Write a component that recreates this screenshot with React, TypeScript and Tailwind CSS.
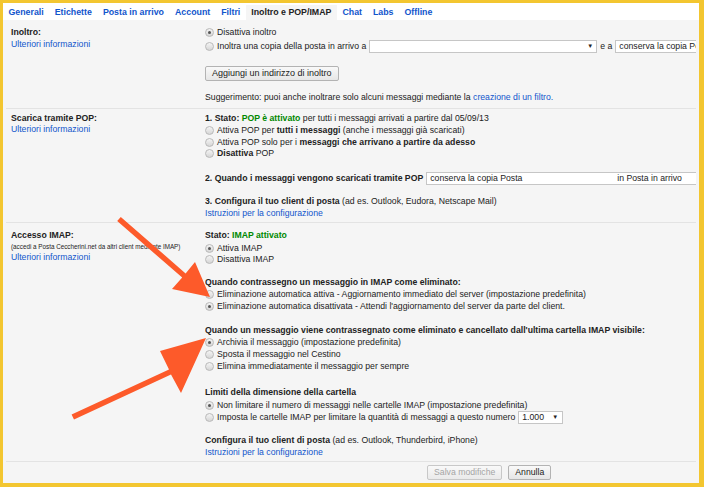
import React from "react";

const tabs = [
  "Generali",
  "Etichette",
  "Posta in arrivo",
  "Account",
  "Filtri",
  "Inoltro e POP/IMAP",
  "Chat",
  "Labs",
  "Offline",
];

function Radio({ checked = false }: { checked?: boolean }) {
  return (
    <span className="mr-[3px] inline-flex h-[9px] w-[9px] shrink-0 items-center justify-center rounded-full border border-[#b9b9b9] bg-gradient-to-b from-[#f4f4f4] to-[#d6d6d6]">
      {checked && <span className="h-[3px] w-[3px] rounded-full bg-[#555]" />}
    </span>
  );
}

function Opt({ checked, children }: { checked?: boolean; children: React.ReactNode }) {
  return (
    <div className="flex h-[11.8px] items-center whitespace-nowrap">
      <Radio checked={checked} />
      <span>{children}</span>
    </div>
  );
}

function Line({ children, className = "" }: { children: React.ReactNode; className?: string }) {
  return <div className={`h-[11.8px] whitespace-nowrap leading-[11.8px] ${className}`}>{children}</div>;
}

function Link({ children }: { children: React.ReactNode }) {
  return <span className="text-[#1155cc]">{children}</span>;
}

function Section({
  left,
  children,
  className = "",
}: {
  left: React.ReactNode;
  children: React.ReactNode;
  className?: string;
}) {
  return (
    <div className={`mx-[3px] flex border-b border-[#e3e3e3] ${className}`}>
      <div className="w-[199px] shrink-0 pl-[5px]">{left}</div>
      <div className="min-w-0 flex-1 overflow-hidden">{children}</div>
    </div>
  );
}

function Arrows() {
  return (
    <svg className="pointer-events-none absolute left-0 top-0" width="704" height="487" viewBox="0 0 704 487">
      <polygon
        fill="#fd5a2a"
        points="120.8,216.9 185.6,273.4 195,262 210,297 172,289 182.2,277.6 117.2,221.1"
      />
      <polygon
        fill="#fd5a2a"
        points="71.6,414.5 169,369.6 160,351 206,338 181,393 171,374.4 74,419.5"
      />
    </svg>
  );
}

export default function App() {
  return (
    <div
      className="relative h-[487px] w-[704px] overflow-hidden bg-[#f3c630] pb-[4px] pl-[3px] pr-[5px] pt-[3px] text-[8.7px] text-[#222]"
      style={{ fontFamily: '"Liberation Sans", Arial, sans-serif' }}
    >
      <div className="flex h-full flex-col overflow-hidden bg-[#f5f5f5]">
        {/* tabs */}
        <div className="flex h-[17px] shrink-0 items-end bg-white">
          {tabs.map((t) => (
            <div
              key={t}
              className={`flex h-[15px] items-center px-[5.5px] text-[8.8px] font-bold ${
                t === "Inoltro e POP/IMAP" ? "bg-[#f5f5f5] text-[#222]" : "text-[#1155cc]"
              }`}
            >
              {t}
            </div>
          ))}
        </div>

        {/* Inoltro */}
        <Section
          className="pb-[4px] pt-[7px]"
          left={
            <>
              <Line className="font-bold">Inoltro:</Line>
              <Line>
                <Link>Ulteriori informazioni</Link>
              </Line>
            </>
          }
        >
          <Opt checked>Disattiva inoltro</Opt>
          <div className="mt-[1px] flex h-[14px] items-center whitespace-nowrap">
            <Radio />
            <span>Inoltra una copia della posta in arrivo a</span>
            <span className="ml-[3px] flex h-[13px] w-[228px] shrink-0 items-center justify-end border border-[#c6c6c6] bg-white pr-[3px] text-[6px]">
              ▼
            </span>
            <span className="ml-[3px]">e a</span>
            <span className="ml-[3px] flex h-[13px] w-[120px] shrink-0 items-center border border-[#c6c6c6] bg-white pl-[3px]">
              conserva la copia Posta in arrivo
            </span>
          </div>
          <div className="mt-[12px] flex">
            <span className="flex h-[15px] items-center rounded-[2px] border border-[#b3b3b3] bg-gradient-to-b from-[#f9f9f9] to-[#e6e6e6] px-[6px] text-[9px]">
              Aggiungi un indirizzo di inoltro
            </span>
          </div>
          <Line className="mt-[11px]">
            Suggerimento: puoi anche inoltrare solo alcuni messaggi mediante la{" "}
            <Link>creazione di un filtro.</Link>
          </Line>
        </Section>

        {/* POP */}
        <Section
          className="pb-[3px] pt-[4px]"
          left={
            <>
              <Line className="font-bold">Scarica tramite POP:</Line>
              <Line>
                <Link>Ulteriori informazioni</Link>
              </Line>
            </>
          }
        >
          <Line>
            <b>1. Stato: </b>
            <b className="text-[#008800]">POP è attivato</b> per tutti i messaggi arrivati a partire dal 05/09/13
          </Line>
          <Opt>
            Attiva POP per <b>tutti i messaggi</b> (anche i messaggi già scaricati)
          </Opt>
          <Opt>
            Attiva POP solo per i <b>messaggi che arrivano a partire da adesso</b>
          </Opt>
          <Opt>
            <b>Disattiva</b> POP
          </Opt>
          <div className="mt-[12px] flex h-[14px] items-center whitespace-nowrap">
            <b>2. Quando i messaggi vengono scaricati tramite POP</b>
            <span className="ml-[3px] flex h-[13px] w-[320px] shrink-0 items-center border border-[#c6c6c6] bg-white pl-[3px]">
              <span className="w-[187px]">conserva la copia Posta</span>
              <span>in Posta in arrivo</span>
            </span>
          </div>
          <Line className="mt-[10px]">
            <b>3. Configura il tuo client di posta</b> (ad es. Outlook, Eudora, Netscape Mail)
          </Line>
          <Line>
            <Link>Istruzioni per la configurazione</Link>
          </Line>
        </Section>

        {/* IMAP */}
        <Section
          className="pb-[2px] pt-[7px]"
          left={
            <>
              <Line className="font-bold">Accesso IMAP:</Line>
              <div className="h-[10px] whitespace-nowrap text-[6.3px] leading-[10px]">
                (accedi a Posta Ceccherini.net da altri client mediante IMAP)
              </div>
              <Line>
                <Link>Ulteriori informazioni</Link>
              </Line>
            </>
          }
        >
          <Line>
            <b>Stato: </b>
            <b className="text-[#008800]">IMAP attivato</b>
          </Line>
          <Opt checked>Attiva IMAP</Opt>
          <Opt>Disattiva IMAP</Opt>

          <Line className="mt-[11px] font-bold">Quando contrassegno un messaggio in IMAP come eliminato:</Line>
          <Opt>Eliminazione automatica attiva - Aggiornamento immediato del server (impostazione predefinita)</Opt>
          <Opt checked>
            Eliminazione automatica disattivata - Attendi l'aggiornamento del server da parte del client.
          </Opt>

          <Line className="mt-[13px] font-bold">
            Quando un messaggio viene contrassegnato come eliminato e cancellato dall'ultima cartella IMAP visibile:
          </Line>
          <Opt checked>Archivia il messaggio (impostazione predefinita)</Opt>
          <Opt>Sposta il messaggio nel Cestino</Opt>
          <Opt>Elimina immediatamente il messaggio per sempre</Opt>

          <Line className="mt-[15px] font-bold">Limiti della dimensione della cartella</Line>
          <Opt checked>Non limitare il numero di messaggi nelle cartelle IMAP (impostazione predefinita)</Opt>
          <div className="flex h-[14px] items-center whitespace-nowrap">
            <Radio />
            <span>Imposta le cartelle IMAP per limitare la quantità di messaggi a questo numero</span>
            <span className="ml-[3px] flex h-[13px] w-[45px] shrink-0 items-center justify-between border border-[#c6c6c6] bg-white pl-[3px] pr-[4px]">
              <span>1.000</span>
              <span className="text-[6px]">▼</span>
            </span>
          </div>

          <Line className="mt-[10px]">
            <b>Configura il tuo client di posta</b> (ad es. Outlook, Thunderbird, iPhone)
          </Line>
          <Line>
            <Link>Istruzioni per la configurazione</Link>
          </Line>
        </Section>

        {/* footer buttons */}
        <div className="flex gap-[6px] pl-[424px] pt-[3px]">
          <span className="flex h-[15px] items-center rounded-[2px] border border-[#c8c8c8] bg-gradient-to-b from-[#f9f9f9] to-[#eaeaea] px-[6px] text-[8.7px] text-[#a5a5a5]">
            Salva modifiche
          </span>
          <span className="flex h-[15px] items-center rounded-[2px] border border-[#b3b3b3] bg-gradient-to-b from-[#f9f9f9] to-[#e6e6e6] px-[6px] text-[8.7px]">
            Annulla
          </span>
        </div>
      </div>
      <Arrows />
    </div>
  );
}
